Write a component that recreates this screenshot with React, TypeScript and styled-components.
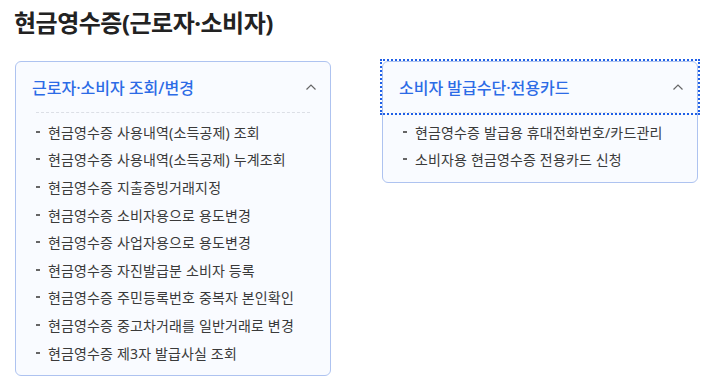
import React from 'react';
import styled, { createGlobalStyle } from 'styled-components';

const GlobalStyle = createGlobalStyle`
  body {
    margin: 0;
    background: #fff;
    font-family: "Noto Sans", "Noto Sans CJK KR", sans-serif;
  }
`;

const Page = styled.div`
  padding: 7px 14px 0 14px;
`;

const Title = styled.h2`
  margin: 0 0 22px;
  font-size: 24px;
  line-height: 32px;
  font-weight: 700;
  color: #222;
  letter-spacing: -0.5px;
`;

const Columns = styled.div`
  display: grid;
  grid-template-columns: 316px 316px;
  column-gap: 51px;
  align-items: start;
  padding-left: 1px;
`;

const Card = styled.div`
  border: 1px solid #aec3f0;
  border-radius: 6px;
  background: #f9fbff;
`;

const Header = styled.button<{ $focused?: boolean }>`
  display: flex;
  align-items: center;
  justify-content: space-between;
  width: 100%;
  height: 50px;
  padding: 0 13px 0 16px;
  border: 0;
  background: transparent;
  font-family: inherit;
  font-size: 16px;
  font-weight: 500;
  color: #2c6be6;
  letter-spacing: 0;
  cursor: pointer;
  outline: ${(p) => (p.$focused ? '2px dotted #1f5fe6' : 'none')};
  outline-offset: 1px;
`;

const Divider = styled.div`
  margin: 0 20px;
  border-top: 1px dashed #dcdfe6;
`;

const List = styled.ul`
  list-style: none;
  margin: 0;
  padding: 5px 20px 9px;
`;

const Item = styled.li`
  display: flex;
  align-items: center;
  gap: 8px;
  height: 27.6px;
  font-size: 14px;
  color: #3a3a3a;
  letter-spacing: 0.15px;

  &::before {
    content: '';
    flex: none;
    width: 4px;
    height: 2px;
    background: #666;
  }
`;

const Chevron = () => (
  <svg width="12" height="8" viewBox="0 0 12 8" fill="none">
    <path d="M1.5 6.5 6 2l4.5 4.5" stroke="#666" strokeWidth="1.2" />
  </svg>
);

type Section = { title: string; items: string[]; focused?: boolean };

const sections: Section[] = [
  {
    title: '근로자·소비자 조회/변경',
    items: [
      '현금영수증 사용내역(소득공제) 조회',
      '현금영수증 사용내역(소득공제) 누계조회',
      '현금영수증 지출증빙거래지정',
      '현금영수증 소비자용으로 용도변경',
      '현금영수증 사업자용으로 용도변경',
      '현금영수증 자진발급분 소비자 등록',
      '현금영수증 주민등록번호 중복자 본인확인',
      '현금영수증 중고차거래를 일반거래로 변경',
      '현금영수증 제3자 발급사실 조회',
    ],
  },
  {
    title: '소비자 발급수단·전용카드',
    focused: true,
    items: ['현금영수증 발급용 휴대전화번호/카드관리', '소비자용 현금영수증 전용카드 신청'],
  },
];

export default function App() {
  return (
    <Page>
      <GlobalStyle />
      <Title>현금영수증(근로자·소비자)</Title>
      <Columns>
        {sections.map((s) => (
          <Card key={s.title}>
            <Header $focused={s.focused}>
              <span>{s.title}</span>
              <Chevron />
            </Header>
            <Divider />
            <List>
              {s.items.map((it) => (
                <Item key={it}>{it}</Item>
              ))}
            </List>
          </Card>
        ))}
      </Columns>
    </Page>
  );
}
